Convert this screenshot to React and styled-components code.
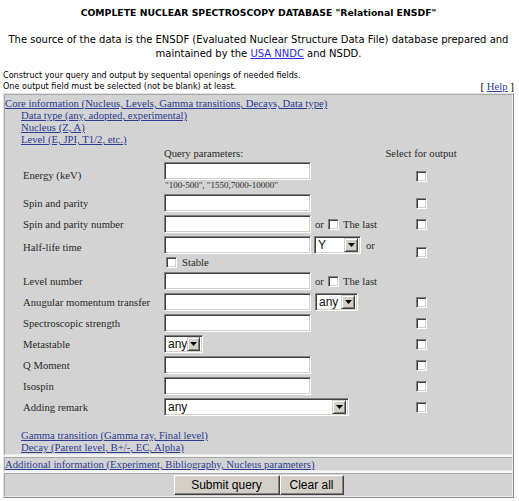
import React from "react";
import styled, { createGlobalStyle } from "styled-components";

const GlobalStyle = createGlobalStyle`
  body {
    margin: 0;
    background: #fff;
  }
`;

const Page = styled.div`
  width: 519px;
  box-sizing: border-box;
  padding: 7px 5px 0 3px;
  font-family: "Liberation Serif", "Times New Roman", serif;
  font-size: 10.7px;
  line-height: 12px;
  color: #2a2a2a;
`;

const Title = styled.h1`
  margin: 0;
  text-align: center;
  font-family: "DejaVu Sans", Verdana, sans-serif;
  font-size: 9.3px;
  line-height: 12px;
  font-weight: bold;
  color: #000;
`;

const Intro = styled.p`
  margin: 14px 0 0;
  text-align: center;
  font-family: "DejaVu Sans", Verdana, sans-serif;
  font-size: 10px;
  line-height: 14px;
  color: #000;
`;

const IntroLink = styled.a`
  color: #2a2ae0;
  text-decoration: underline;
`;

const NoteBar = styled.div`
  margin-top: 9px;
  display: flex;
  justify-content: space-between;
  align-items: flex-end;
`;

const Note = styled.div`
  font-family: "DejaVu Sans", Tahoma, sans-serif;
  font-size: 8.1px;
  line-height: 11px;
  color: #000;
`;

const HelpBox = styled.div`
  font-size: 11px;
  line-height: 12px;
  color: #000;
`;

const Link = styled.a`
  color: #2b3d94;
  text-decoration: underline;
  font-size: 10.7px;
  line-height: 12px;
`;

const Table = styled.div`
  margin-top: 1px;
  display: flex;
  flex-direction: column;
  gap: 2px;
  background: #f4f4f4;
  border: 1px solid;
  border-color: #e0e0e0 #8a8a8a #8a8a8a #e0e0e0;
`;

const Cell = styled.div`
  background: #d3d3d3;
  border: 1px solid;
  border-color: #a8a8a8 #ececec #ececec #a8a8a8;
  padding: ${({ $pad }) => $pad || "0"};
  display: flex;
  flex-direction: column;
  align-items: ${({ $center }) => ($center ? "center" : "stretch")};
`;

const SubBlock = styled.div`
  padding-left: 16px;
  display: flex;
  flex-direction: column;
  align-items: flex-start;
`;

const Form = styled.div`
  margin: 1px 0 0 2px;
  display: flex;
  flex-direction: column;
  gap: 3px;
`;

const Row = styled.div`
  display: grid;
  grid-template-columns: 141px 220px 74px;
  align-items: center;
`;

const HeadRow = styled(Row)`
  height: 14px;
  margin-bottom: -1px;
`;

const Label = styled.span`
  white-space: nowrap;
  align-self: ${({ $top }) => ($top ? "start" : "center")};
  margin-top: ${({ $top }) => $top || 0}px;
`;

const Query = styled.div`
  display: flex;
  flex-direction: column;
  align-items: flex-start;
`;

const Line = styled.div`
  display: flex;
  align-items: center;
  white-space: nowrap;
`;

const Output = styled.div`
  display: flex;
  justify-content: center;
  white-space: nowrap;
`;

const Hint = styled.div`
  font-size: 9px;
  line-height: 11px;
  padding-left: 1px;
`;

const TextInput = styled.input.attrs({ type: "text" })`
  box-sizing: border-box;
  width: 147px;
  height: 18px;
  margin: 0;
  padding: 0 2px;
  background: #fff;
  border: 1px solid;
  border-color: #808080 #fff #fff #808080;
  box-shadow: inset 1px 1px 0 #404040, inset -1px -1px 0 #d4d0c8;
  outline: none;
`;

const Check = styled.input.attrs({ type: "checkbox" })`
  appearance: none;
  box-sizing: border-box;
  width: 11px;
  height: 11px;
  margin: ${({ $m }) => $m || "0"};
  background: #fff;
  border: 1px solid;
  border-color: #808080 #fff #fff #808080;
  box-shadow: inset 1px 1px 0 #404040, inset -1px -1px 0 #d4d0c8;
`;

const Or = styled.span`
  margin-left: ${({ $ml }) => $ml || 4}px;
`;

const Dropdown = styled.span`
  box-sizing: border-box;
  display: inline-flex;
  align-items: center;
  width: ${({ $w }) => $w}px;
  height: 18px;
  margin-left: ${({ $ml }) => $ml || 0}px;
  background: #fff;
  border: 1px solid;
  border-color: #808080 #fff #fff #808080;
  box-shadow: inset 1px 1px 0 #404040, inset -1px -1px 0 #d4d0c8;
  padding: 2px;
  font-family: "Liberation Sans", Arial, sans-serif;
  font-size: 12px;
  line-height: 14px;
  color: #111;
`;

const DropValue = styled.span`
  flex: 1;
  padding-left: 1px;
`;

const DropButton = styled.span`
  box-sizing: border-box;
  width: 14px;
  height: 14px;
  display: flex;
  align-items: center;
  justify-content: center;
  background: #d4d0c8;
  border: 1px solid;
  border-color: #d4d0c8 #404040 #404040 #d4d0c8;
  box-shadow: inset 1px 1px 0 #fff, inset -1px -1px 0 #808080;
`;

const Arrow = () => (
  <svg width="7" height="4" viewBox="0 0 7 4">
    <path d="M0 0h7L3.5 4z" fill="#000" />
  </svg>
);

const Select = ({ w, value, ml }) => (
  <Dropdown $w={w} $ml={ml}>
    <DropValue>{value}</DropValue>
    <DropButton>
      <Arrow />
    </DropButton>
  </Dropdown>
);

const LowerLinks = styled(SubBlock)`
  margin-top: 13px;
  padding-bottom: 1px;
`;

const Buttons = styled.div`
  display: flex;
  padding: 1px 0 1px;
`;

const Button = styled.button`
  box-sizing: border-box;
  height: 20px;
  width: ${({ $w }) => $w}px;
  margin: 0;
  padding: 0;
  background: #d4d0c8;
  border: 1px solid;
  border-color: #fff #404040 #404040 #fff;
  box-shadow: inset -1px -1px 0 #808080;
  font-family: "Liberation Sans", Arial, sans-serif;
  font-size: 12px;
  color: #000;
`;

const fields = [
  { label: "Spin and parity" },
  { label: "Spin and parity number", last: true },
];

export default function App() {
  return (
    <Page>
      <GlobalStyle />
      <Title>COMPLETE NUCLEAR SPECTROSCOPY DATABASE "Relational ENSDF"</Title>
      <Intro>
        The source of the data is the ENSDF (Evaluated Nuclear Structure Data File) database prepared and
        <br />
        maintained by the <IntroLink href="#">USA NNDC</IntroLink> and NSDD.
      </Intro>

      <NoteBar>
        <Note>
          Construct your query and output by sequental openings of needed fields.
          <br />
          One output field must be selected (not be blank) at least.
        </Note>
        <HelpBox>
          [ <Link href="#">Help</Link> ]
        </HelpBox>
      </NoteBar>

      <Table>
        <Cell $pad="2px 0 0 0">
          <div>
            <Link href="#">Core information (Nucleus, Levels, Gamma transitions, Decays, Data type)</Link>
          </div>
          <SubBlock>
            <Link href="#">Data type (any, adopted, experimental)</Link>
            <Link href="#">Nucleus (Z, A)</Link>
            <Link href="#">Level (E, JPI, T1/2, etc.)</Link>
          </SubBlock>

          <SubBlock>
            <Form>
              <HeadRow>
                <span />
                <span>Query parameters:</span>
                <Output>Select for output</Output>
              </HeadRow>

              <Row>
                <Label $top={7}>Energy (keV)</Label>
                <Query>
                  <TextInput />
                  <Hint>"100-500", "1550,7000-10000"</Hint>
                </Query>
                <Output>
                  <Check />
                </Output>
              </Row>

              {fields.map((f) => (
                <Row key={f.label}>
                  <Label>{f.label}</Label>
                  <Line>
                    <TextInput />
                    {f.last && (
                      <>
                        <Or>or</Or>
                        <Check $m="0 4px 0 4px" />
                        The last
                      </>
                    )}
                  </Line>
                  <Output>
                    <Check />
                  </Output>
                </Row>
              ))}

              <Row>
                <Label $top={5}>Half-life time</Label>
                <Query>
                  <Line>
                    <TextInput />
                    <Select w={47} value="Y" ml={3} />
                    <Or $ml={5}>or</Or>
                  </Line>
                  <Line>
                    <Check $m="3px 5px 1px 2px" />
                    Stable
                  </Line>
                </Query>
                <Output>
                  <Check />
                </Output>
              </Row>

              <Row>
                <Label>Level number</Label>
                <Line>
                  <TextInput />
                  <Or>or</Or>
                  <Check $m="0 4px 0 4px" />
                  The last
                </Line>
                <span />
              </Row>

              <Row>
                <Label>Anugular momentum transfer</Label>
                <Line>
                  <TextInput />
                  <Select w={43} value="any" ml={4} />
                </Line>
                <Output>
                  <Check />
                </Output>
              </Row>

              <Row>
                <Label>Spectroscopic strength</Label>
                <TextInput />
                <Output>
                  <Check />
                </Output>
              </Row>

              <Row>
                <Label>Metastable</Label>
                <Line>
                  <Select w={39} value="any" />
                </Line>
                <Output>
                  <Check />
                </Output>
              </Row>

              {["Q Moment", "Isospin"].map((l) => (
                <Row key={l}>
                  <Label>{l}</Label>
                  <TextInput />
                  <Output>
                    <Check />
                  </Output>
                </Row>
              ))}

              <Row>
                <Label>Adding remark</Label>
                <Line>
                  <Select w={185} value="any" />
                </Line>
                <Output>
                  <Check />
                </Output>
              </Row>
            </Form>
          </SubBlock>

          <LowerLinks>
            <Link href="#">Gamma transition (Gamma ray, Final level)</Link>
            <Link href="#">Decay (Parent level, B+/-, EC, Alpha)</Link>
          </LowerLinks>
        </Cell>

        <Cell>
          <div>
            <Link href="#">Additional information (Experiment, Bibliography, Nucleus parameters)</Link>
          </div>
        </Cell>

        <Cell $center>
          <Buttons>
            <Button $w={106}>Submit query</Button>
            <Button $w={64}>Clear all</Button>
          </Buttons>
        </Cell>
      </Table>
    </Page>
  );
}
